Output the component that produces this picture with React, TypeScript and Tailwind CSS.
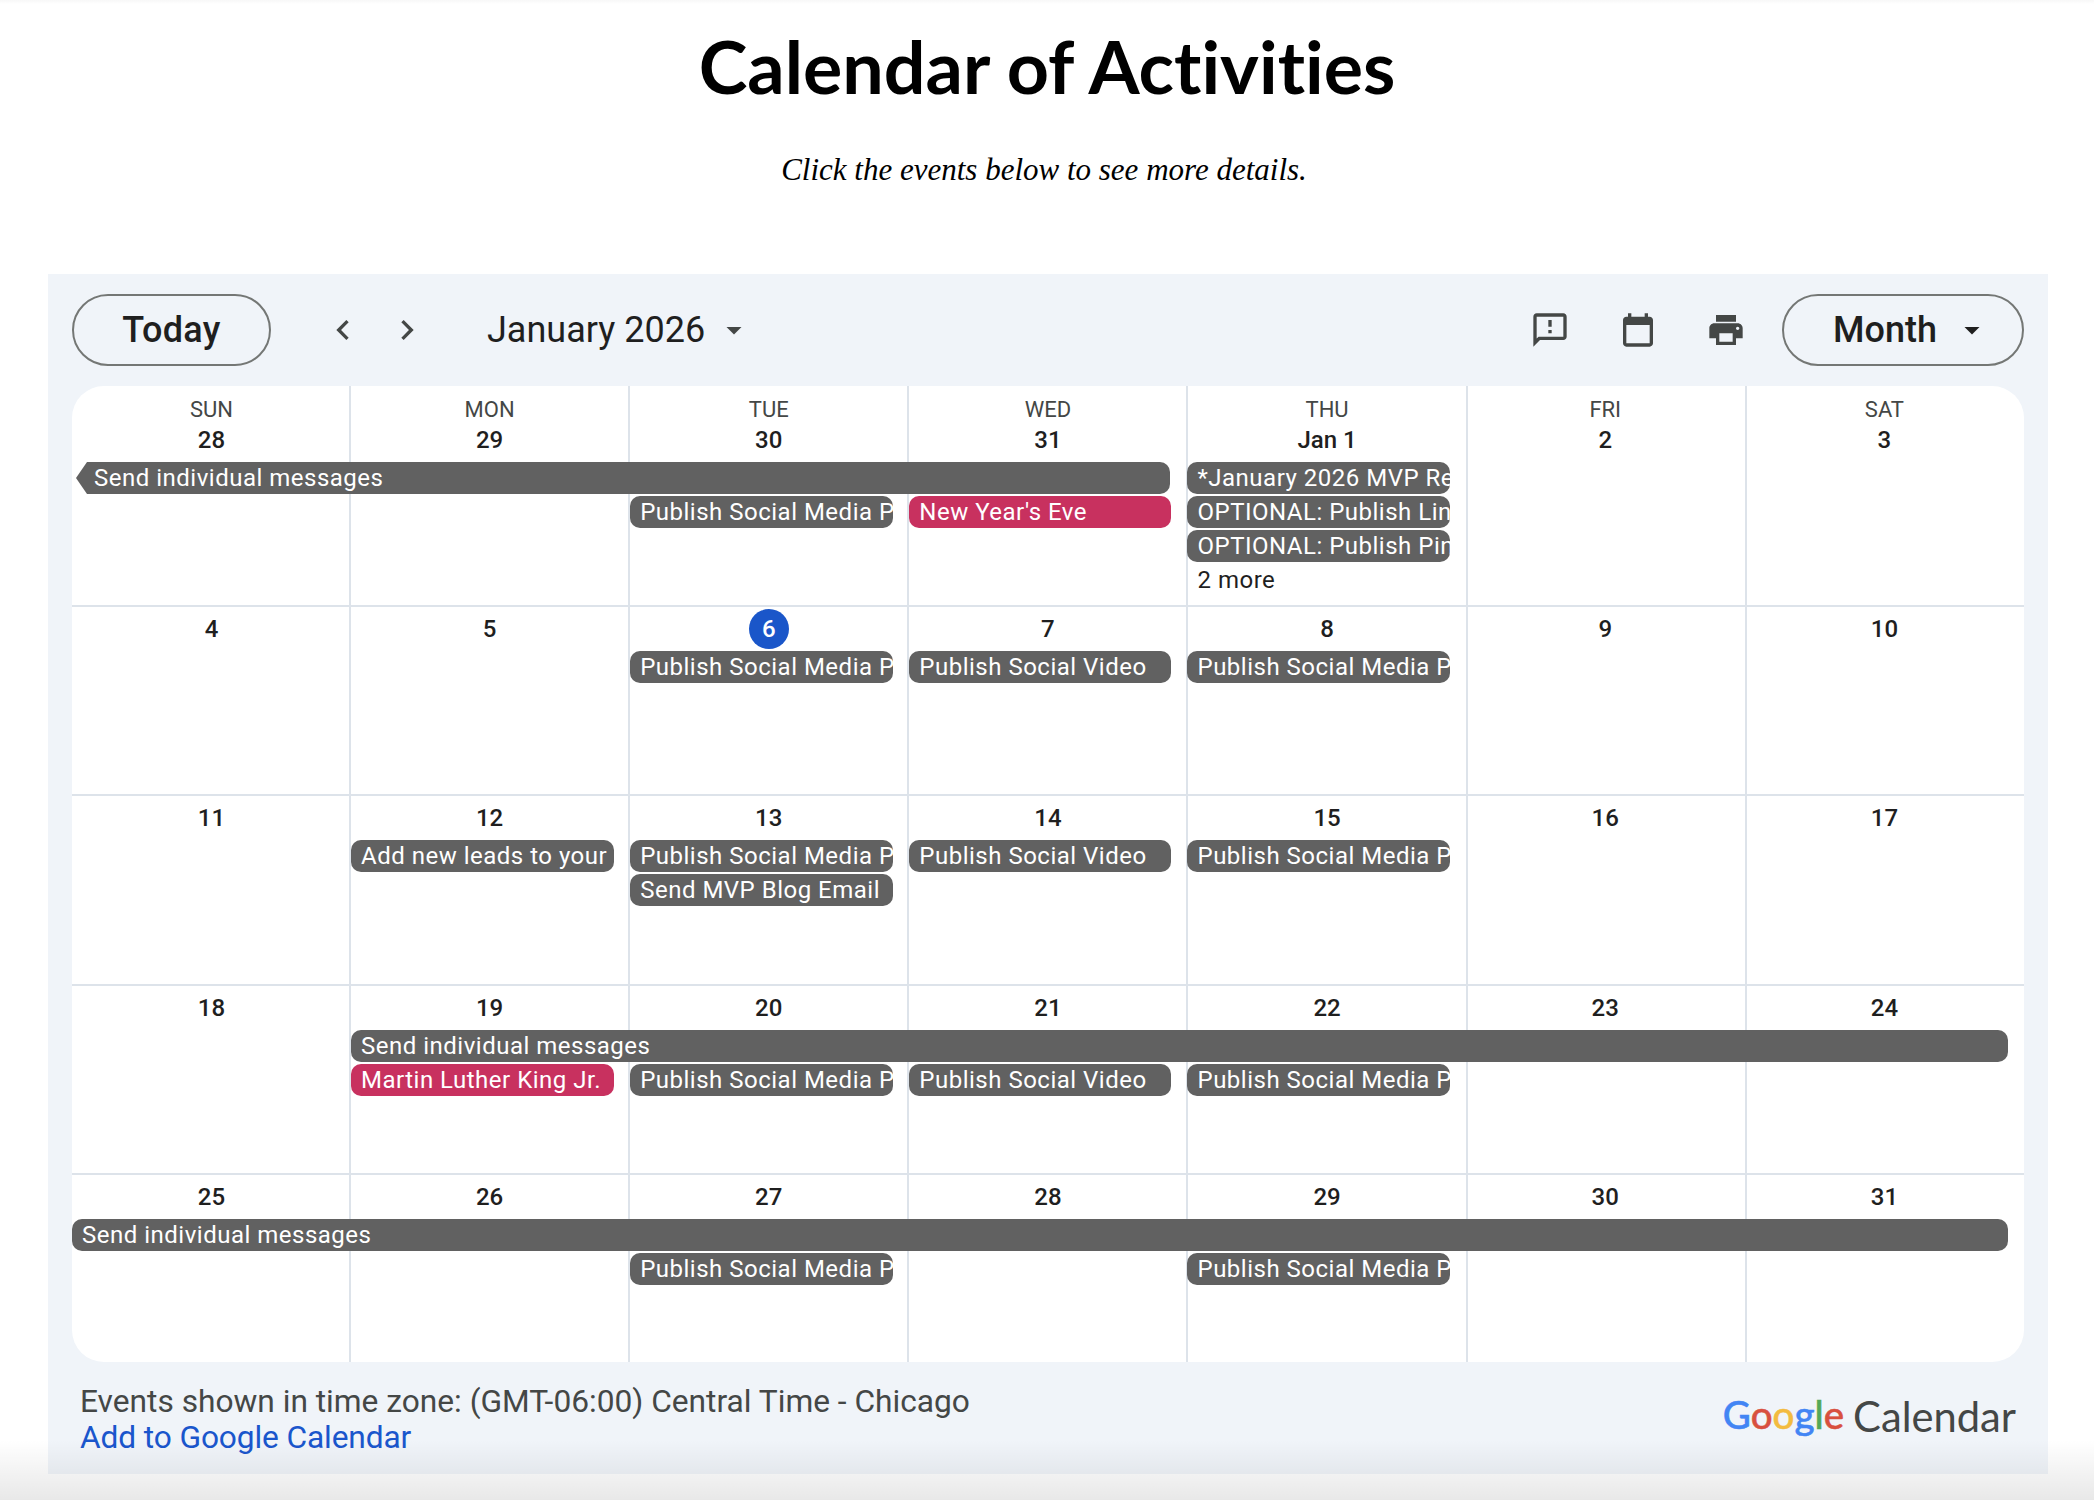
import React from 'react';

const SANS = "font-['Roboto',sans-serif]";

type Ev = { label: string; start: string; color?: string; arrow?: boolean; row: string };

const cellLines = ['', 'border-l-2', 'border-l-2', 'border-l-2', 'border-l-2', 'border-l-2', 'border-l-2'];
const colStarts = ['col-start-1', 'col-start-2', 'col-start-3', 'col-start-4', 'col-start-5', 'col-start-6', 'col-start-7'];

// bars sit a little off the column lines, not the same on every column
const MON = 'col-start-2 ml-[2px] mr-[14px]';
const TUE = 'col-start-3 ml-[2px] mr-[14px]';
const WED = 'col-start-4 ml-[2px] mr-[15px]';
const THU = 'col-start-5 ml-[1px] mr-[16px]';

const Bar: React.FC<{ ev: Ev }> = ({ ev }) => {
  const bg = ev.color ?? 'bg-[#616161]';
  if (ev.arrow) {
    return (
      <div className={`${ev.start} ${ev.row} ml-[4px] mr-[16px] h-[32px] overflow-hidden whitespace-nowrap rounded-r-[10px] ${bg} pl-[18px] text-[24px] leading-[32px] tracking-[0.5px] text-white [clip-path:polygon(0_50%,11px_0,100%_0,100%_100%,11px_100%)]`}>
        {ev.label}
      </div>
    );
  }
  return (
    <div className={`${ev.start} ${ev.row} h-[32px] overflow-hidden whitespace-nowrap rounded-[10px] ${bg} pl-[10px] text-[24px] leading-[32px] tracking-[0.5px] text-white`}>
      {ev.label}
    </div>
  );
};

const Week: React.FC<{
  dates: string[];
  height: string;
  first?: boolean;
  today?: number;
  events: Ev[];
  more?: React.ReactNode;
}> = ({ dates, height, first, today, events, more }) => {
  const days = ['SUN', 'MON', 'TUE', 'WED', 'THU', 'FRI', 'SAT'];
  return (
    <div className={`grid grid-cols-[277px_repeat(6,1fr)] ${height} ${first ? 'grid-rows-[76px_34px_34px_34px_1fr]' : 'border-t-2 border-[#dde3ea] grid-rows-[44px_34px_34px_34px_1fr]'}`}>
      {dates.map((d, i) => (
        <div key={i} className={`${colStarts[i]} row-start-1 row-span-full ${cellLines[i]} border-[#dde3ea]`} />
      ))}
      {dates.map((d, i) => (
        <div key={d + i} className={`${colStarts[i]} row-start-1 flex flex-col items-center ${i < 5 ? 'pl-[2px]' : ''}`}>
          {first && <div className="mt-[11px] text-[22px] leading-[26px] text-[#444746]">{days[i]}</div>}
          <div
            className={
              today === i
                ? 'mt-[2px] flex h-[40px] w-[40px] items-center justify-center rounded-full bg-[#1a56c9] text-[24px] font-medium text-white'
                : `${first ? 'mt-[1px]' : 'mt-[6px]'} h-[32px] text-[24px] font-medium leading-[32px] text-[#1f1f1f]`
            }
          >
            {d}
          </div>
        </div>
      ))}
      {events.map((ev, i) => (
        <Bar key={i} ev={ev} />
      ))}
      {more}
    </div>
  );
};

const publish = 'Publish Social Media P';
const pink = 'bg-[#c8315f]';

export default function App() {
  return (
    <div className={`relative h-[1500px] overflow-hidden bg-white ${SANS}`}>
      <div className="flex h-[274px] flex-col items-center">
        <h1 className="mt-[18px] font-['Lato',sans-serif] text-[73.6px] font-bold leading-[96px] text-black [font-variant-ligatures:none]">
          Calendar of Activities
        </h1>
        <p className="mr-[6px] mt-[37px] font-['Liberation_Serif',serif] text-[31px] italic leading-[38px] text-black">
          Click the events below to see more details.
        </p>
      </div>

      <div className="ml-[48px] h-[1200px] w-[2000px] bg-[#f0f4f9] px-[24px]">
        <div className="flex h-[112px] items-center">
          <button className="h-[72px] w-[199px] rounded-full border-2 border-[#747775] text-[36px] font-medium tracking-[0.3px] text-[#1f1f1f]">
            Today
          </button>
          <svg className="ml-[52px]" width="40" height="40" viewBox="0 0 24 24" fill="#444746">
            <path d="M15.41 7.41L14 6l-6 6 6 6 1.41-1.41L10.83 12z" />
          </svg>
          <svg className="ml-[24px]" width="40" height="40" viewBox="0 0 24 24" fill="#444746">
            <path d="M8.59 16.59L10 18l6-6-6-6-1.41 1.41L13.17 12z" />
          </svg>
          <div className="ml-[60px] text-[36px] leading-[44px] text-[#1f1f1f]">January 2026</div>
          <svg className="ml-[11px]" width="36" height="36" viewBox="0 0 24 24" fill="#444746">
            <path d="M7 10l5 5 5-5z" />
          </svg>
          <svg className="ml-auto" width="40" height="40" viewBox="0 0 24 24" fill="#444746">
            <path d="M20 2H4c-1.1 0-1.99.9-1.99 2L2 22l4-4h14c1.1 0 2-.9 2-2V4c0-1.1-.9-2-2-2zm0 14H5.17L4 17.17V4h16v12zM11 12h2v2h-2zm0-6h2v4h-2z" />
          </svg>
          <svg className="ml-[48px]" width="40" height="40" viewBox="0 0 24 24" fill="#444746">
            <path d="M19 4h-1V2h-2v2H8V2H6v2H5c-1.11 0-1.99.9-1.99 2L3 20c0 1.1.89 2 2 2h14c1.1 0 2-.9 2-2V6c0-1.1-.9-2-2-2zm0 16H5V9h14v11z" />
          </svg>
          <svg className="ml-[48px]" width="40" height="40" viewBox="0 0 24 24" fill="#444746">
            <path d="M19 8H5c-1.66 0-3 1.34-3 3v6h4v4h12v-4h4v-6c0-1.66-1.34-3-3-3zm-3 11H8v-5h8v5zm3-7c-.55 0-1-.45-1-1s.45-1 1-1 1 .45 1 1-.45 1-1 1zm-1-9H6v4h12V3z" />
          </svg>
          <button className="ml-[36px] flex h-[72px] w-[242px] items-center rounded-full border-2 border-[#747775] pl-[49px] text-[36px] font-medium text-[#1f1f1f]">
            Month
            <svg className="ml-[17px]" width="36" height="36" viewBox="0 0 24 24" fill="#1f1f1f">
              <path d="M7 10l5 5 5-5z" />
            </svg>
          </button>
        </div>

        <div className="h-[976px] overflow-hidden rounded-[32px] bg-white">
          <Week
            first
            height="h-[219px]"
            dates={['28', '29', '30', '31', 'Jan 1', '2', '3']}
            events={[
              { label: 'Send individual messages', start: 'col-start-1 col-span-4', row: 'row-start-2', arrow: true },
              { label: '*January 2026 MVP Re', start: THU, row: 'row-start-2' },
              { label: publish, start: TUE, row: 'row-start-3' },
              { label: "New Year's Eve", start: WED, row: 'row-start-3', color: pink },
              { label: 'OPTIONAL: Publish Lin', start: THU, row: 'row-start-3' },
              { label: 'OPTIONAL: Publish Pin', start: THU, row: 'row-start-4' },
            ]}
            more={
              <div className="col-start-5 row-start-5 pl-[11px] text-[24px] leading-[32px] tracking-[0.5px] text-[#1f1f1f]">2 more</div>
            }
          />
          <Week
            height="h-[189px]"
            today={2}
            dates={['4', '5', '6', '7', '8', '9', '10']}
            events={[
              { label: publish, start: TUE, row: 'row-start-2' },
              { label: 'Publish Social Video', start: WED, row: 'row-start-2' },
              { label: publish, start: THU, row: 'row-start-2' },
            ]}
          />
          <Week
            height="h-[190px]"
            dates={['11', '12', '13', '14', '15', '16', '17']}
            events={[
              { label: 'Add new leads to your', start: MON, row: 'row-start-2' },
              { label: publish, start: TUE, row: 'row-start-2' },
              { label: 'Publish Social Video', start: WED, row: 'row-start-2' },
              { label: publish, start: THU, row: 'row-start-2' },
              { label: 'Send MVP Blog Email', start: TUE, row: 'row-start-3' },
            ]}
          />
          <Week
            height="h-[189px]"
            dates={['18', '19', '20', '21', '22', '23', '24']}
            events={[
              { label: 'Send individual messages', start: 'col-start-2 col-span-6 ml-[2px] mr-[16px]', row: 'row-start-2' },
              { label: 'Martin Luther King Jr.', start: MON, row: 'row-start-3', color: pink },
              { label: publish, start: TUE, row: 'row-start-3' },
              { label: 'Publish Social Video', start: WED, row: 'row-start-3' },
              { label: publish, start: THU, row: 'row-start-3' },
            ]}
          />
          <Week
            height="h-[189px]"
            dates={['25', '26', '27', '28', '29', '30', '31']}
            events={[
              { label: 'Send individual messages', start: 'col-start-1 col-span-7 mr-[16px]', row: 'row-start-2' },
              { label: publish, start: TUE, row: 'row-start-3' },
              { label: publish, start: THU, row: 'row-start-3' },
            ]}
          />
        </div>

        <div className="flex h-[112px] items-start justify-between">
          <div className="pl-[8px] pt-[22px] text-[31.7px] leading-[36px] text-[#444746]">
            <div>Events shown in time zone: (GMT-06:00) Central Time - Chicago</div>
            <a className="tracking-[-0.12px] text-[#1a56cc]">Add to Google Calendar</a>
          </div>
          <div className="mr-[8px] mt-[30px] flex items-baseline font-['Lato',sans-serif] text-[41.7px] leading-[48px] text-[#444746]">
            <span className="-translate-y-[3px] text-[38.5px] font-medium [-webkit-text-stroke:0.5px]">
              <span className="text-[#4285f4]">G</span>
              <span className="text-[#d8503f]">o</span>
              <span className="text-[#f3bb40]">o</span>
              <span className="text-[#4285f4]">g</span>
              <span className="text-[#55a858]">l</span>
              <span className="text-[#d8503f]">e</span>
            </span>
            <span className="ml-[9px]">Calendar</span>
          </div>
        </div>
      </div>

      {/* browser edge shade over the top and bottom of the page */}
      <div className="pointer-events-none absolute inset-x-0 top-0 h-[4px] bg-gradient-to-b from-black/[0.03] to-transparent" />
      <div className="pointer-events-none absolute inset-x-0 bottom-0 h-[60px] bg-gradient-to-b from-transparent to-black/[0.09]" />
    </div>
  );
}
